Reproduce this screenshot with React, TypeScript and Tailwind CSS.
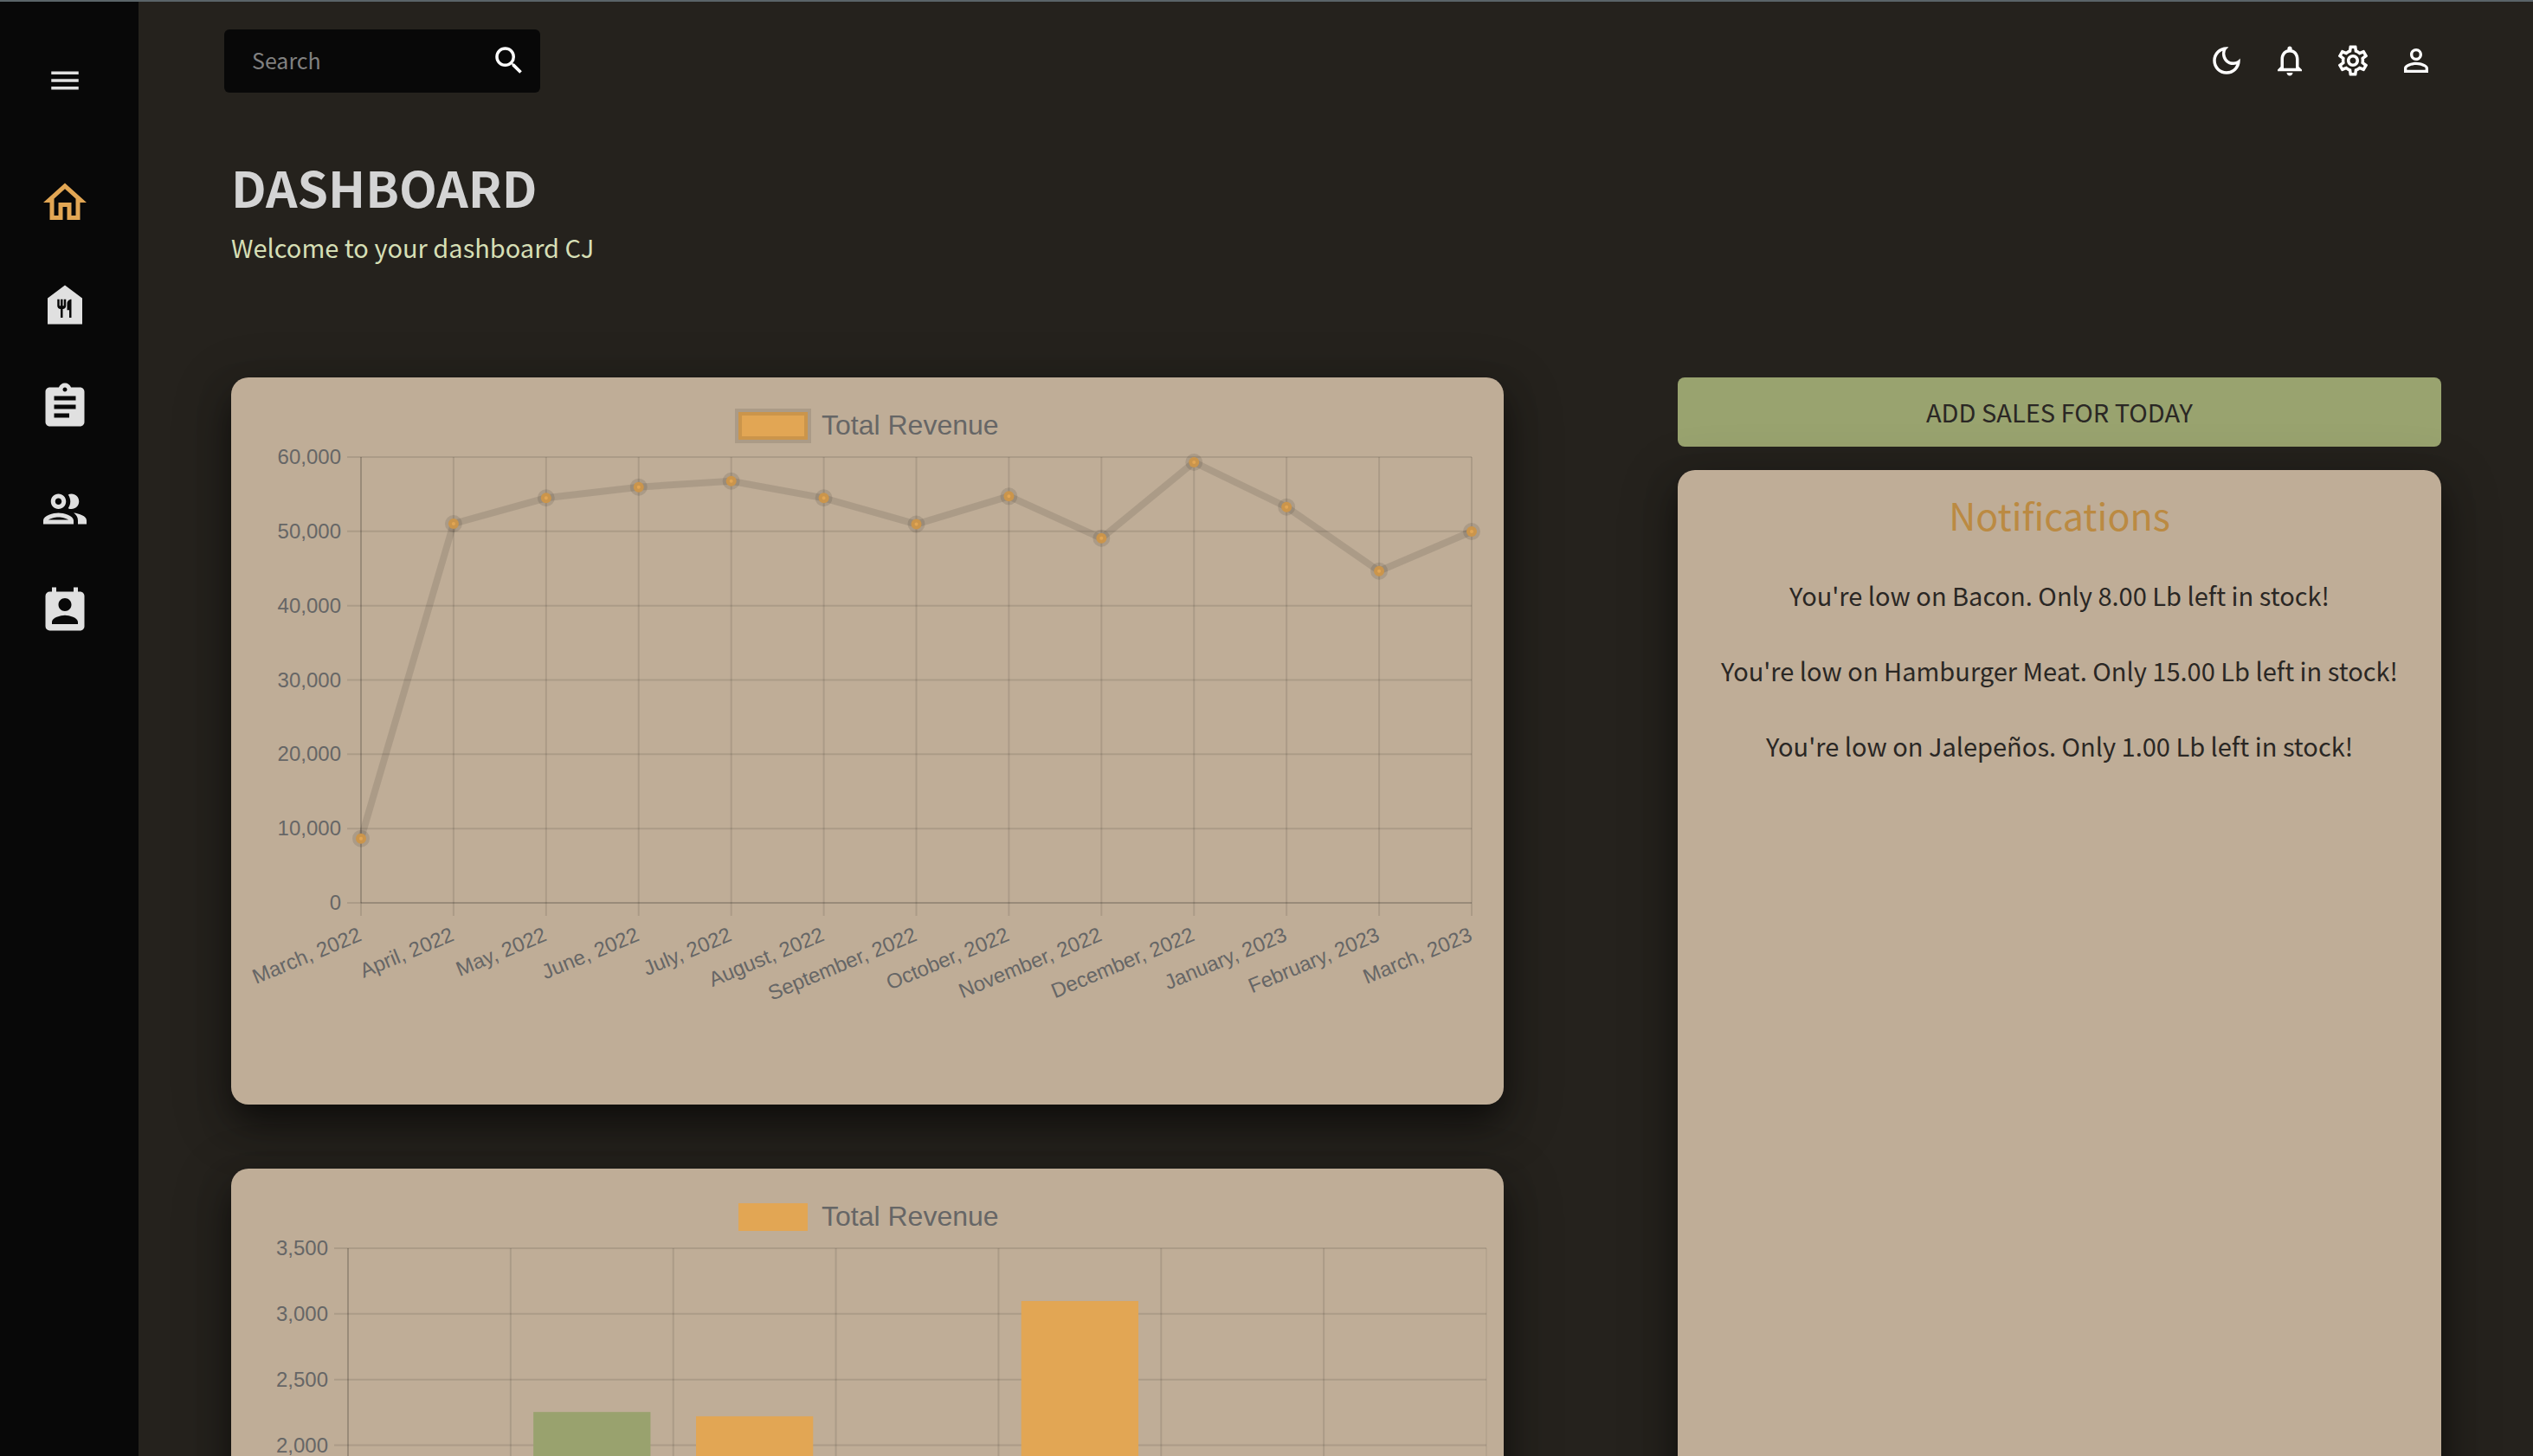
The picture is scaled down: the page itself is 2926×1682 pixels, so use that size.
import type { ReactNode } from "react";
import {
  MdAssignment,
  MdFoodBank,
  MdMenu,
  MdOutlineDarkMode,
  MdOutlineHome,
  MdOutlineNotifications,
  MdOutlinePeople,
  MdOutlinePersonOutline,
  MdOutlineSettings,
  MdPermContactCalendar,
  MdSearch,
} from "react-icons/md";

const navItems = [
  { label: "Home", icon: MdOutlineHome, active: true },
  { label: "Inventory", icon: MdFoodBank, active: false },
  { label: "Orders", icon: MdAssignment, active: false },
  { label: "Team", icon: MdOutlinePeople, active: false },
  { label: "Contacts", icon: MdPermContactCalendar, active: false },
];

const toolbarItems = [
  { label: "Toggle dark mode", icon: MdOutlineDarkMode },
  { label: "Alerts", icon: MdOutlineNotifications },
  { label: "Settings", icon: MdOutlineSettings },
  { label: "Profile", icon: MdOutlinePersonOutline },
];

const notifications = [
  "You're low on Bacon. Only 8.00 Lb left in stock!",
  "You're low on Hamburger Meat. Only 15.00 Lb left in stock!",
  "You're low on Jalepeños. Only 1.00 Lb left in stock!",
];

const monthlyRevenue = [
  { month: "March, 2022", value: 8660 },
  { month: "April, 2022", value: 51030 },
  { month: "May, 2022", value: 54490 },
  { month: "June, 2022", value: 55960 },
  { month: "July, 2022", value: 56770 },
  { month: "August, 2022", value: 54490 },
  { month: "September, 2022", value: 50970 },
  { month: "October, 2022", value: 54720 },
  { month: "November, 2022", value: 49080 },
  { month: "December, 2022", value: 59300 },
  { month: "January, 2023", value: 53280 },
  { month: "February, 2023", value: 44660 },
  { month: "March, 2023", value: 49980 },
];

const dailyRevenue = [
  { slot: 1, value: 2253, fill: "#99a26e" },
  { slot: 2, value: 2220, fill: "#e2a654" },
  { slot: 4, value: 3098, fill: "#e2a654" },
];

const GRID = "rgba(0,0,0,0.1)";
const FONT = "font-['Liberation_Sans',Arial,sans-serif]";
const CARD =
  "rounded-[20px] bg-[#bfad97] shadow-[0_20px_38px_-6px_rgba(0,0,0,0.55),0_18px_60px_8px_rgba(0,0,0,0.25)]";

function Card({ children }: { children: ReactNode }) {
  return <section className={CARD}>{children}</section>;
}

function Legend({ outlined }: { outlined?: boolean }) {
  return (
    <g>
      <rect x={586} y={40} width={80} height={32} fill="#e2a654" stroke={outlined ? GRID : "none"} strokeWidth={8} />
      <text x={682} y={66} fontSize={32} fill="#666666">
        Total Revenue
      </text>
    </g>
  );
}

function LineChart() {
  const left = 150;
  const right = 1433;
  const top = 92;
  const bottom = 607;
  const xAt = (i: number) => left + (i * (right - left)) / 12;
  const yAt = (v: number) => bottom - (v * (bottom - top)) / 60000;
  const ticks = [60000, 50000, 40000, 30000, 20000, 10000, 0];
  return (
    <svg viewBox="0 0 1470 840" className={`block h-auto w-full ${FONT}`} role="img" aria-label="Total revenue by month">
      <Legend outlined />
      {ticks.map((t) => (
        <g key={t}>
          <line x1={134} x2={right} y1={yAt(t)} y2={yAt(t)} stroke={GRID} strokeWidth={2} />
          <text x={127} y={yAt(t) + 8} fontSize={24} fill="#666666" textAnchor="end">
            {t.toLocaleString("en-US")}
          </text>
        </g>
      ))}
      {monthlyRevenue.map((d, i) => (
        <g key={d.month}>
          <line x1={xAt(i)} x2={xAt(i)} y1={top} y2={622} stroke={GRID} strokeWidth={2} />
          <text transform={`translate(${xAt(i) + 2} 650) rotate(-22.5)`} fontSize={24} fill="#666666" textAnchor="end">
            {d.month}
          </text>
        </g>
      ))}
      <path d={`M${left} ${top}V${bottom}`} stroke={GRID} strokeWidth={2} fill="none" />
      <path d={`M${left} ${bottom}H${right}`} stroke={GRID} strokeWidth={2} fill="none" />
      <polyline
        points={monthlyRevenue.map((d, i) => `${xAt(i)},${yAt(d.value)}`).join(" ")}
        fill="none"
        stroke={GRID}
        strokeWidth={8}
      />
      {monthlyRevenue.map((d, i) => (
        <circle key={d.month} cx={xAt(i)} cy={yAt(d.value)} r={6} fill="#e2a654" stroke={GRID} strokeWidth={8} />
      ))}
    </svg>
  );
}

function BarChart() {
  const left = 135;
  const right = 1450;
  const top = 92;
  const bottom = 623;
  const slot = (right - left) / 7;
  const yAt = (v: number) => bottom - (v * (bottom - top)) / 3500;
  const ticks = [3500, 3000, 2500, 2000];
  return (
    <svg viewBox="0 0 1470 840" className={`block h-auto w-full ${FONT}`} role="img" aria-label="Total revenue by day">
      <Legend />
      {ticks.map((t) => (
        <g key={t}>
          <line x1={119} x2={right} y1={yAt(t)} y2={yAt(t)} stroke={GRID} strokeWidth={2} />
          <text x={112} y={yAt(t) + 8} fontSize={24} fill="#666666" textAnchor="end">
            {t.toLocaleString("en-US")}
          </text>
        </g>
      ))}
      {[0, 1, 2, 3, 4, 5, 6, 7].map((i) => (
        <line
          key={i}
          x1={left + i * slot}
          x2={left + i * slot}
          y1={top}
          y2={bottom}
          stroke={GRID}
          strokeWidth={i === 7 ? 1 : 2}
        />
      ))}
      <path d={`M${left} ${top}V${bottom}`} stroke={GRID} strokeWidth={2} />
      {dailyRevenue.map((d) => (
        <rect
          key={d.slot}
          x={left + d.slot * slot + slot * 0.14}
          y={yAt(d.value)}
          width={slot * 0.72}
          height={bottom - yAt(d.value)}
          fill={d.fill}
        />
      ))}
    </svg>
  );
}

export default function App() {
  return (
    <div className="flex h-screen overflow-hidden border-t-2 border-[#5a6468] bg-[#25221d] font-['Noto_Sans_CJK_SC','Noto_Sans',sans-serif]">
      <aside className="flex w-40 shrink-0 flex-col items-center bg-[#080808] pt-[70px] pr-[10px] text-[#e0e0e0]">
        <button type="button" aria-label="Open menu">
          <MdMenu className="size-[42px]" />
        </button>
        <nav className="mt-[90px] flex flex-col gap-[58px]">
          {navItems.map(({ label, icon: Icon, active }) => (
            <a key={label} href={`#${label.toLowerCase()}`} aria-label={label} className={active ? "text-[#e2a654]" : ""}>
              <Icon className="size-[60px]" />
            </a>
          ))}
        </nav>
      </aside>

      <main className="min-w-0 flex-1">
        <header className="flex items-center justify-between pt-8 pr-[114px] pl-[99px]">
          <div className="flex h-[73px] w-[365px] items-center rounded-md bg-[#080808] pr-[15px] pb-px pl-8">
            <input
              type="text"
              aria-label="Search"
              placeholder="Search"
              className="min-w-0 flex-1 bg-transparent pb-0.5 text-[25px] leading-9 text-white outline-none placeholder:text-[#808080]"
            />
            <button type="button" aria-label="Submit search" className="text-white">
              <MdSearch className="size-[42px]" />
            </button>
          </div>
          <div className="flex gap-[31px] pb-px text-white">
            {toolbarItems.map(({ label, icon: Icon }) => (
              <button key={label} type="button" aria-label={label}>
                <Icon className="size-[42px]" />
              </button>
            ))}
          </div>
        </header>

        <div className="pr-[106px] pl-[107px]">
          <h1 className="mt-[68px] text-[57px] leading-[80px] font-bold text-[#d4d4d4]">DASHBOARD</h1>
          <p className="mt-1.5 text-[29px] leading-[48px] text-[#d6dfb5]">Welcome to your dashboard CJ</p>

          <div className="mt-[127px] grid grid-cols-[5fr_3fr] gap-[201px]">
            <div className="flex flex-col gap-[74px]">
              <Card>
                <LineChart />
              </Card>
              <Card>
                <BarChart />
              </Card>
            </div>
            <div className="flex flex-col gap-[27px]">
              <button
                type="button"
                className="h-20 rounded-lg bg-[#99a36f] pb-0.5 text-[29px] leading-10 text-[#2a2724]"
              >
                ADD SALES FOR TODAY
              </button>
              <section className={`flex-1 text-center ${CARD}`}>
                <h2 className="pt-5 text-[43px] leading-[62px] text-[#bb8a42]">Notifications</h2>
                <ul className="mt-[38px] flex flex-col gap-[39px]">
                  {notifications.map((n) => (
                    <li key={n} className="text-[29px] leading-[48px] text-[#2a2724]">
                      {n}
                    </li>
                  ))}
                </ul>
              </section>
            </div>
          </div>
        </div>
      </main>
    </div>
  );
}
